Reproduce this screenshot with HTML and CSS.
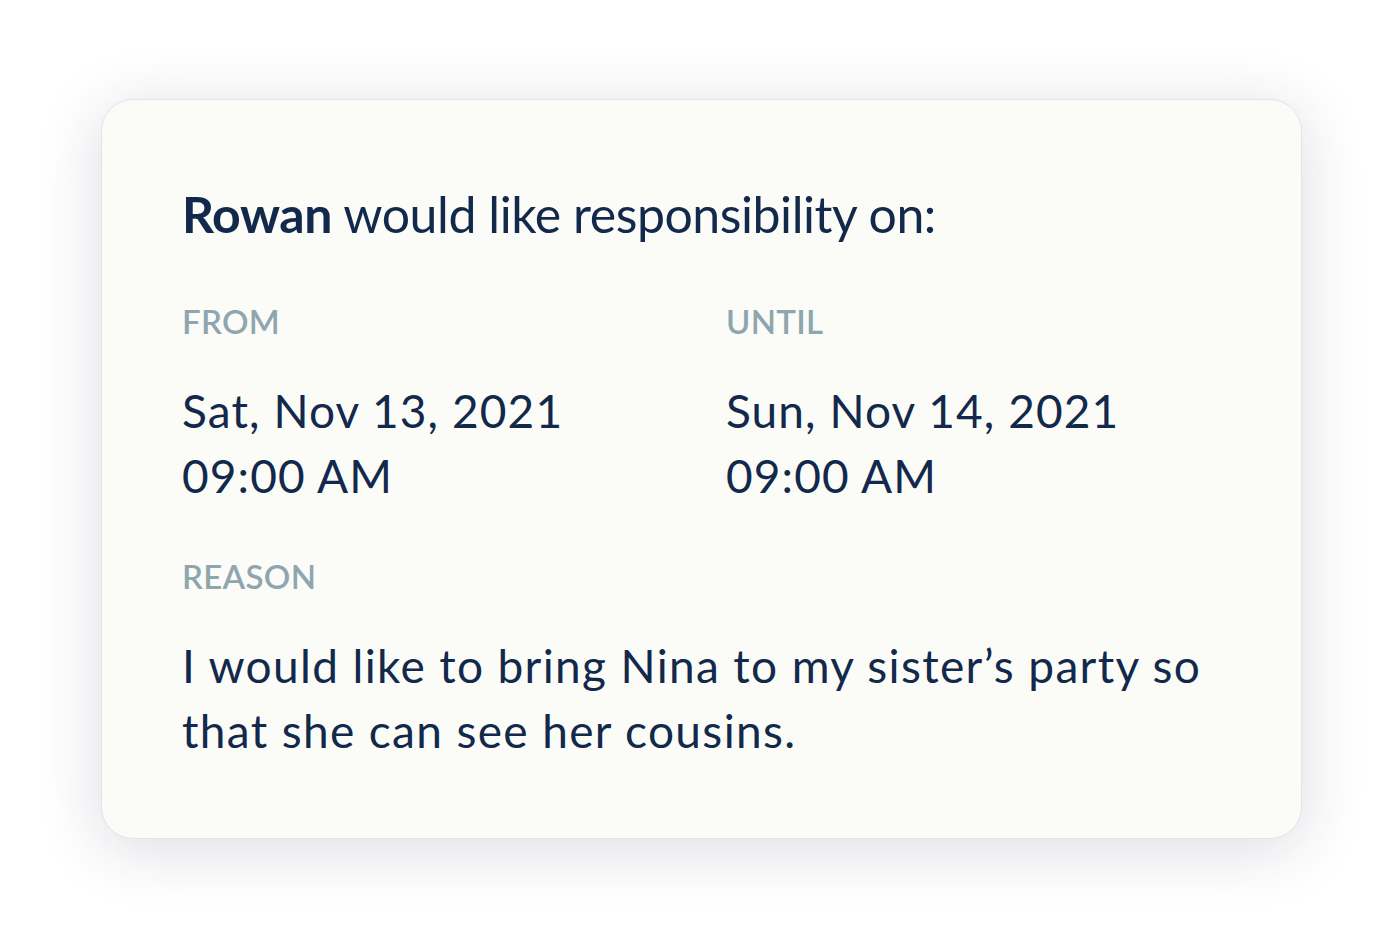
FILE: index.html
```html
<!DOCTYPE html>
<html>
<head>
    <title>Responsibility Request</title>
    <link rel="stylesheet" href="styles.css">
</head>
<body>
    <div class="page">
        <div class="card">
            <h1 class="title"><strong>Rowan</strong> would like responsibility on:</h1>
            <div class="range">
                <div class="field">
                    <div class="label">FROM</div>
                    <div class="value">Sat, Nov 13, 2021<br>09:00 AM</div>
                </div>
                <div class="field">
                    <div class="label">UNTIL</div>
                    <div class="value">Sun, Nov 14, 2021<br>09:00 AM</div>
                </div>
            </div>
            <div class="field">
                <div class="label">REASON</div>
                <div class="value reason">I would like to bring Nina to my sister’s party so that she can see her cousins.</div>
            </div>
        </div>
    </div>
</body>
</html>
```

FILE: styles.css
```css
:root {
    --text-color: #13294B;
    --label-color: #8FA6AF;
    --card-color: #FBFCF8;
    --border-color: #E2E4E8;
}

html, body {
    background: #FFFFFF;
}

body {
    margin: 0;
    font-family: Lato, "Open Sans", sans-serif;
    color: var(--text-color);
}

.page {
    min-height: 100vh;
    box-sizing: border-box;
    padding: 99px 0 0 101px;
}

.card {
    width: 1201px;
    box-sizing: border-box;
    padding: 84px 78px 75px 80px;
    background: var(--card-color);
    border: 1px solid var(--border-color);
    border-radius: 32px;
    box-shadow: 0 10px 64px rgba(28, 39, 76, 0.16);
}

.title {
    margin: 0 0 57px;
    font-size: 50px;
    line-height: 60px;
    font-weight: 400;
    letter-spacing: -0.45px;
}

.title strong {
    font-weight: 700;
}

.range {
    display: grid;
    grid-template-columns: 544px 1fr;
    margin-bottom: 48px;
}

.label {
    font-size: 33px;
    line-height: 40px;
    font-weight: 600;
    letter-spacing: 0.3px;
    color: var(--label-color);
    margin-bottom: 37px;
}

.value {
    font-size: 46px;
    line-height: 65px;
    letter-spacing: 1.1px;
}

.value.reason {
    letter-spacing: 1.35px;
}
```
